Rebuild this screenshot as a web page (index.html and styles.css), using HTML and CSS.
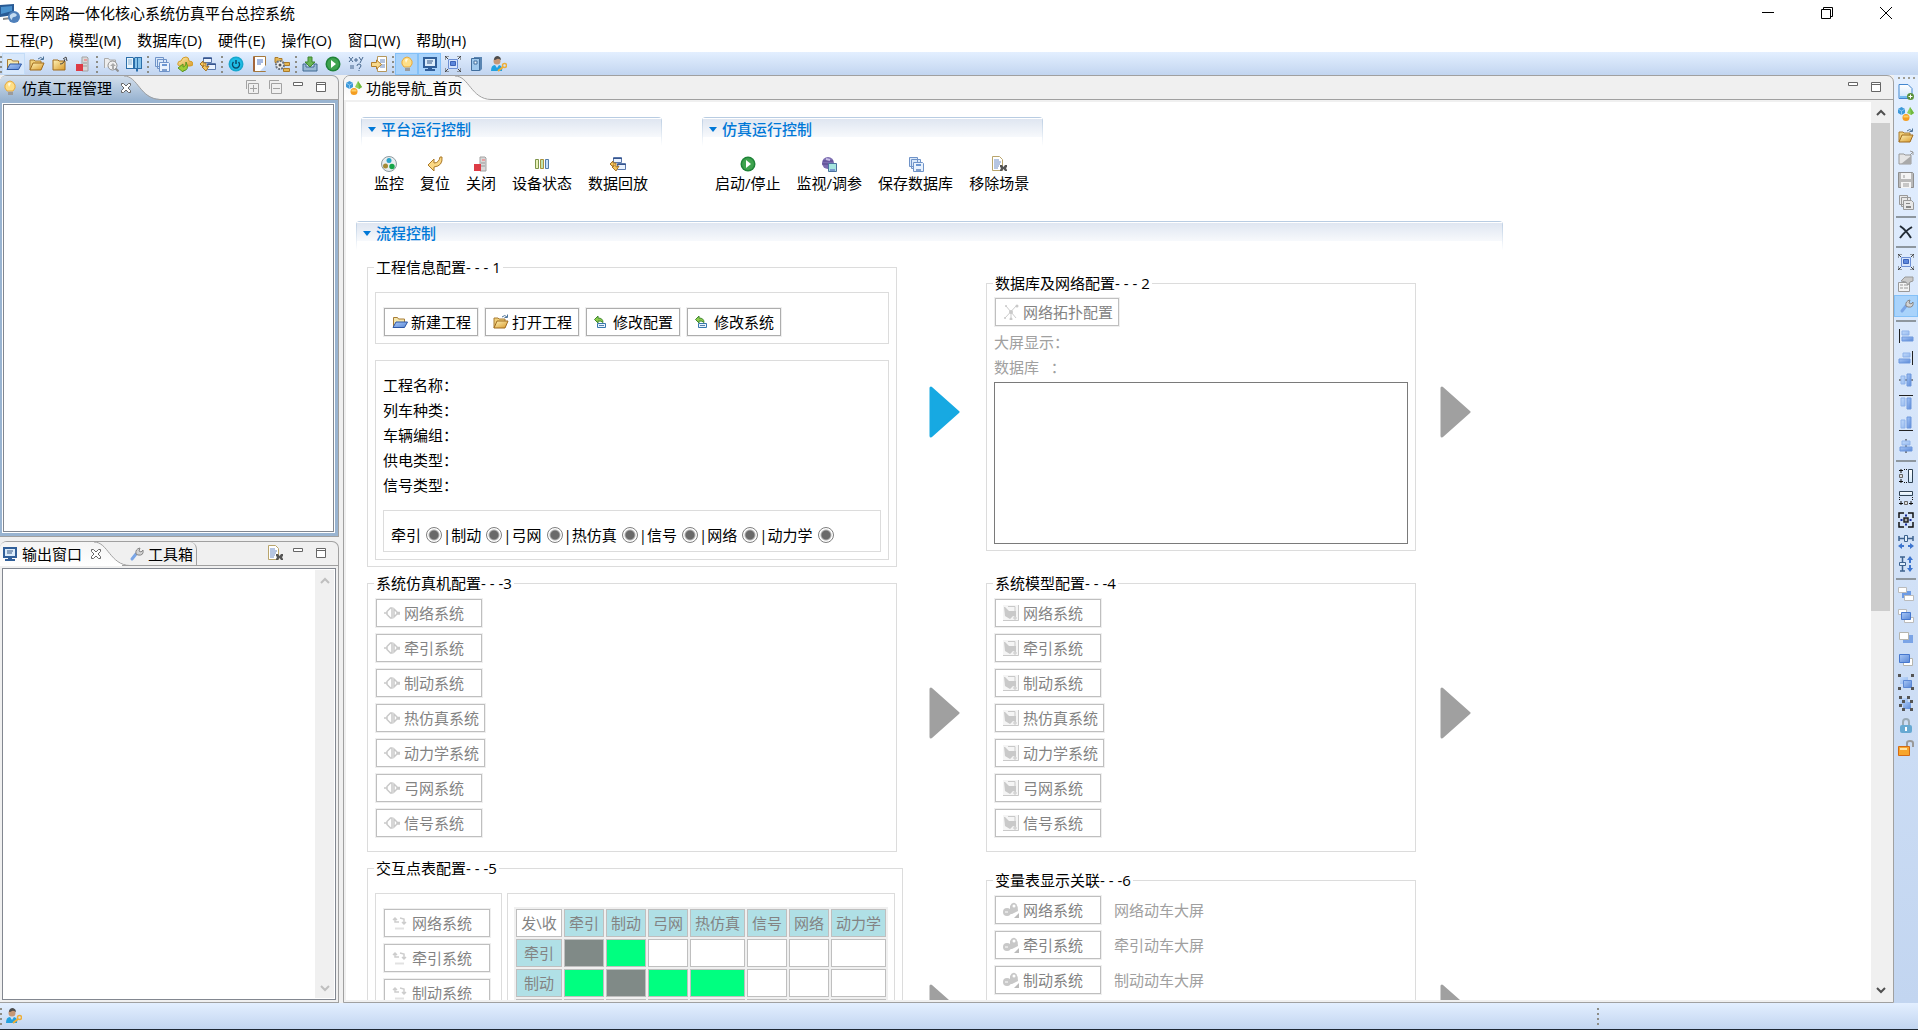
FILE: index.html
```html
<!DOCTYPE html>
<html lang="zh-CN">
<head>
<meta charset="utf-8">
<title>车网路一体化核心系统仿真平台总控系统</title>
<link rel="stylesheet" href="styles.css">
</head>
<body>
<svg class="sprite" width="0" height="0" aria-hidden="true">
<defs>
<linearGradient id="gy" x1="0" y1="0" x2="1" y2="1"><stop offset="0" stop-color="#fff3b8"/><stop offset="1" stop-color="#d99a2b"/></linearGradient>
<linearGradient id="gb" x1="0" y1="0" x2="1" y2="1"><stop offset="0" stop-color="#a9c8f7"/><stop offset="1" stop-color="#5a88d6"/></linearGradient>
<linearGradient id="gl" x1="0" y1="0" x2="1" y2="1"><stop offset="0" stop-color="#c3dbfb"/><stop offset="1" stop-color="#94b8ee"/></linearGradient>
<linearGradient id="gp" x1="0" y1="0" x2="0" y2="1"><stop offset="0" stop-color="#fff"/><stop offset="1" stop-color="#cfe6fa"/></linearGradient>
<linearGradient id="tabBlue" x1="0" y1="0" x2="0" y2="1"><stop offset="0" stop-color="#d3dfec"/><stop offset="1" stop-color="#99b4d1"/></linearGradient>
<linearGradient id="tabGrey" x1="0" y1="0" x2="0" y2="1"><stop offset="0" stop-color="#f4f4f4"/><stop offset="1" stop-color="#fff"/></linearGradient>
</defs>
<symbol id="app" viewBox="0 0 20 20"><path d="M0 2l14-1v11l-14 2z" fill="#285a94"/><path d="M1 4l11-1v5l-11 3z" fill="#4b92ce"/><path d="M3 15l8-1v2l-8 1z" fill="#888"/><circle cx="14" cy="14" r="6" fill="#4f80bb"/><path d="M10 12q4-4 7 0q-1 2-3 2t-2 3q-3-2-2-5z" fill="#c5dcf1"/></symbol>
<symbol id="folder-new" viewBox="0 0 16 16"><path d="M1.500 12V3.500h4l1 1.500h6v3" fill="#f5e7ad" stroke="#a87c35"/><path d="M1 13.500l3-5.500h11.500l-3 5.500z" fill="url(#gb)" stroke="#2d56a3"/></symbol>
<symbol id="folder-open" viewBox="0 0 16 16"><path d="M1 14V4h4l1 1h6v3" fill="#f0cf78" stroke="#a87c35"/><path d="M1 14l3-7h11l-3 7z" fill="url(#gy)" stroke="#a06a1c"/><path d="M9 3q3-3 5 0M14.500 0.500v3h-3" fill="none" stroke="#4d7398"/></symbol>
<symbol id="folder-up" viewBox="0 0 16 16"><path d="M1 14V4h5l1 1h6v9z" fill="url(#gy)" stroke="#a06a1c"/><path d="M8 8q4 0 5-5M11 3l3-2 1 4" fill="none" stroke="#444"/></symbol>
<symbol id="folder-grey" viewBox="0 0 16 16"><path d="M1 14V4h5l1 1h6v9z" fill="#e5e5e5" stroke="#999"/><path d="M3 14l10-8v8z" fill="#a9a9a9"/><path d="M12 5l3-3M12 1l3 1v3" fill="none" stroke="#999"/></symbol>
<symbol id="server" viewBox="0 0 16 16"><path d="M7 1h5l1 1v13H7z" fill="#d8d8d8" stroke="#a3a3a3"/><path d="M9 3h3v2H9z" fill="#e9a0a0"/><path d="M8 7h4M8 10h4" stroke="#999"/><path d="M1 8h7v7H1z" fill="#dd3b45"/></symbol>
<symbol id="export" viewBox="0 0 16 16"><path d="M1.500 12V2.500h4l1 1.500h6v4" fill="#eee" stroke="#aaa"/><circle cx="9.500" cy="9.500" r="4.500" fill="#f1f1f1" stroke="#8f8f8f"/><path d="M7 10l3-3 3 3h-2v3H9v-3z" fill="#aaa"/><path d="M12.500 12.500l3 3" stroke="#8f8f8f" stroke-width="2"/></symbol>
<symbol id="book" viewBox="0 0 16 16"><path d="M0 1h7l1 1 1-1h7v12h-4v3l-1-1-1 1v-3H0z" fill="#2b6ea9"/><path d="M1 2h6v10H1z" fill="#e9f5fc"/><path d="M2 4h4M2 6h4M2 8h4" stroke="#8ab2d2"/><path d="M9 2h2v10H9zM12 2h3v10h-3z" fill="#86c3e9"/></symbol>
<symbol id="save-all" viewBox="0 0 16 16"><g fill="#d9e8fa" stroke="#6f93c8"><path d="M1.500 1.500h8v9h-8zM3.500 3.500h9v9h-9z"/><path d="M5.500 6.500h9l1 1v8h-10z" fill="#e9f2fd"/></g><path d="M8 8h5v2H8z" fill="#6b96d2"/><path d="M8 13h5v2H8z" fill="#7f9fce"/></symbol>
<symbol id="save-all-grey" viewBox="0 0 16 16"><g fill="#e8e8e8" stroke="#999"><path d="M1.500 1.500h8v9h-8zM3.500 3.500h9v9h-9z"/><path d="M5.500 6.500h8l2 2v7h-10z"/></g><path d="M8 9h4v1H8zM8 12h5v2H8z" fill="#888"/></symbol>
<symbol id="save-grey" viewBox="0 0 16 16"><path d="M.5.500h14l1 1v14H.5z" fill="#b9b9b9" stroke="#8f8f8f"/><path d="M3 1h10v6H3zM3 10h10v6H3z" fill="#f4f4f4"/><path d="M6 3v3M5 12h6M5 14h6" stroke="#999"/></symbol>
<symbol id="cloud" viewBox="0 0 16 16"><path d="M4 10q-4 0-3-3 0-2 3-2 1-4 5-4 3 0 3 4 4 0 4 3 0 2-3 2z" fill="url(#gy)" stroke="#d49c28"/><path d="M1 12l5-4v3q3 0 3-5 4 8-3 9v1z" fill="#9dcd35" stroke="#5a9620"/></symbol>
<symbol id="playback" viewBox="0 0 16 16"><path d="M3.500 1.500h8v5h-8zM7.500 7.500h8v6h-8z" fill="#eaf3ff" stroke="#5a78ab"/><path d="M3 2h9v1H3zM7 8h9v1H7z" fill="#39568f"/><path d="M0 8l3-3v2h3v4l3-1-3 5-4-4 2-1V9H3v2z" fill="#f3c45a" stroke="#a6752a"/></symbol>
<symbol id="power" viewBox="0 0 16 16"><circle cx="8" cy="8" r="7.500" fill="#18a7ce"/><circle cx="8" cy="8" r="6" fill="#1fbde6"/><path d="M5.500 6a3.500 3.500 0 1 0 5 0M8 4v4" fill="none" stroke="#0b4a6a" stroke-width="1.500"/></symbol>
<symbol id="note" viewBox="0 0 16 16"><path d="M2.500.500h12v15h-12z" fill="#fff" stroke="#a5793e"/><path d="M3 1v14" stroke="#a2653c" stroke-width="2"/><path d="M6 4h6M6 6h6M6 8h4" stroke="#4d74c4"/><path d="M9 15l6-6v6z" fill="#c6daf8"/></symbol>
<symbol id="tree-gear" viewBox="0 0 16 16"><path d="M1 1.500h3l1 1h3v4H1zM9.500 6.500h6v3h-6zM9.500 12.500h6v3h-6z" fill="#e4b653" stroke="#a97a2b"/><circle cx="6" cy="9" r="4" fill="#eee" stroke="#69727e" stroke-width="2" stroke-dasharray="2 1"/><circle cx="6" cy="9" r="1.500" fill="#555"/></symbol>
<symbol id="import" viewBox="0 0 16 16"><path d="M1 8v7h14V8h-3v3H4V8z" fill="#9ab9d5" stroke="#41698f"/><path d="M6 1h4v5h3l-5 5-5-5h3z" fill="#6ab553" stroke="#3e8730"/></symbol>
<symbol id="play" viewBox="0 0 16 16"><circle cx="8" cy="8" r="7.500" fill="#1f8338"/><circle cx="8" cy="8" r="6" fill="#3ea34e"/><path d="M6 4l5 4-5 4z" fill="#fff"/></symbol>
<symbol id="formula" viewBox="0 0 16 16"><path d="M1 1l4 5M5 1L1 6M6 4h4M8 2v4M11 1l2 3M15 1l-3 6M2 10h4M2 12h4M9 10q0-2 2-2t2 2l-2 3M11 14v1" fill="none" stroke="#44658c"/></symbol>
<symbol id="doc-arrow" viewBox="0 0 16 16"><path d="M6.500.500h9v15h-9z" fill="#fff" stroke="#b5975c"/><path d="M9 4h5M9 6h5M9 9h5M9 11h5" stroke="#6686bb"/><path d="M0.500 6.500h5V4l5 4.500-5 4.500v-2.500h-5z" fill="#f8d98b" stroke="#b37e2b"/></symbol>
<symbol id="bulb" viewBox="0 0 16 16"><path d="M5 11Q2 8 3 5q2-4 5-4t5 4q1 3-2 6z" fill="#ffdf86" stroke="#e6a83e"/><path d="M6 4q1-2 3-1l-2 4z" fill="#fff9df"/><path d="M6 12h5v3H6z" fill="#9b9b9b"/></symbol>
<symbol id="monitor" viewBox="0 0 16 16"><path d="M2 2h12v9H2z" fill="#dcecfa" stroke="#315f99" stroke-width="2"/><path d="M5 5h6M5 7h5" stroke="#355784"/><path d="M6 12h4v1h3v2H3v-2h3z" fill="#315f99"/></symbol>
<symbol id="fit" viewBox="0 0 16 16"><path d="M3.500 3.500h9v9h-9z" fill="#d5e4fc" stroke="#6e90d4"/><path d="M5.500 5.500h5v4h-5z" fill="#5b86dc" stroke="#3c63b8"/><path d="M0 4V0h4M12 0h4v4M16 12v4h-4M4 16H0v-4M0 0l3 3M16 0l-3 3M0 16l3-3M16 16l-3-3" fill="none" stroke="#444"/></symbol>
<symbol id="notebook" viewBox="0 0 16 16"><path d="M6 1h8v12l-2 2H6z" fill="#5a85b2"/><path d="M3.500 2.500h8v12h-8z" fill="#9fc9ed" stroke="#416e9d"/><path d="M6 5h3v3H6z" fill="#eaf4fc" stroke="#416e9d"/></symbol>
<symbol id="user-key" viewBox="0 0 16 16"><circle cx="6" cy="5" r="3.500" fill="#c79775"/><path d="M3 4q0-4 4-4 3 1 3 4-3-2-4-1t-3 1z" fill="#4c4c4c"/><path d="M0 15q0-6 4-6l2 3 2-3q4 1 3 6z" fill="#21a1df"/><path d="M7 15l5-4" stroke="#edae38" stroke-width="2"/><circle cx="13.500" cy="9.500" r="2" fill="none" stroke="#edae38" stroke-width="1.500"/></symbol>
<symbol id="nav" viewBox="0 0 16 16"><path d="M0 3l3.500-2L7 3v4L3.500 9 0 7z" fill="#3c99da"/><path d="M0 3l3.500 2L7 3M3.500 5v4" fill="none" stroke="#8dc7ef"/><path d="M9 7l3-6 4 6-3 2z" fill="#8fd05c"/><path d="M12 1l1 8 3-2z" fill="#6fb83e"/><circle cx="8" cy="11.500" r="3.500" fill="#f49d20"/><path d="M5.500 10.500h5" stroke="#ffcf63" stroke-width="2"/></symbol>
<symbol id="cams" viewBox="0 0 16 16"><circle cx="8" cy="8" r="7.500" fill="#e9eef0" stroke="#8d9a9f"/><circle cx="8" cy="4.500" r="2.500" fill="#29a3c8"/><circle cx="4.500" cy="10" r="2.500" fill="#a58a36"/><circle cx="11" cy="10.500" r="2.700" fill="#17a548"/></symbol>
<symbol id="reset" viewBox="0 0 16 16"><path d="M1 9l6-6v4q5 0 6-6h2q1 9-8 10v4z" fill="#fbd884" stroke="#ac7a28"/></symbol>
<symbol id="bars" viewBox="0 0 16 16"><path d="M1.500 3.500h3v9h-3z" fill="#e8f1b7" stroke="#7c944b"/><path d="M6.500 3.500h3v9h-3z" fill="#bfe3b0" stroke="#a8923c"/><path d="M11.500 3.500h3v9h-3z" fill="#c9dffa" stroke="#527ca9"/></symbol>
<symbol id="watch" viewBox="0 0 16 16"><circle cx="7" cy="7" r="6" fill="#7c6db0"/><path d="M2 5h10M1 8h12" stroke="#52458a"/><path d="M5 3l4 1" stroke="#c9bee8" stroke-width="2"/><path d="M7.500 7.500h8v8h-8z" fill="#a6e5df" stroke="#4b719e"/><path d="M9 13h5v2H9z" fill="#7a9bd0"/></symbol>
<symbol id="doc-x" viewBox="0 0 16 16"><path d="M1.500.500h7l3 3v11h-10z" fill="#fff" stroke="#b9a56c"/><path d="M3 4h5M3 6h7M3 8h6M3 10h5M3 12h4" stroke="#6d8cc5"/><path d="M9 9h2l1.500 2L14 9h2v2l-1 1 1 2v1h-2l-1.500-2-1.500 2H9v-1l1-2-1-1z" fill="#555"/></symbol>
<symbol id="edit" viewBox="0 0 16 16"><path d="M3.500 9.500h8v4h-8z" fill="#e9f4ff" stroke="#3876ad"/><path d="M5 11.500h5" stroke="#5983ad"/><path d="M.5 5.500L4 2v2q5 0 5 4.500Q7 6.500 4 7v2z" fill="#8ccb4c" stroke="#3f8730"/></symbol>
<symbol id="topology" viewBox="0 0 16 16"><path d="M3 2l10 12M14 1L2 14M8 8v7" stroke="#ccc"/><g fill="#c9c9c9"><circle cx="8" cy="8" r="2"/><circle cx="14" cy="2" r="1.500"/><circle cx="3" cy="2" r="1"/><circle cx="2" cy="14" r="1"/><circle cx="8" cy="15" r="1.500"/></g></symbol>
<symbol id="plug" viewBox="0 0 16 16"><path d="M0 8h3M3 6.500L6.500 3H8v10H6.500L3 9.500zM10 4l3 3v2l-3 3zM13 7.500h3M13 9h3" fill="none" stroke="#c9c9c9" stroke-width="1.500"/></symbol>
<symbol id="model" viewBox="0 0 16 16"><path d="M0 0h16v16H0z" fill="#f5f5f5"/><path d="M15.500 0v15.500H0" fill="none" stroke="#cacaca"/><path d="M1 2h1l4 4h7v6l-3-1-3 3-5-3z" fill="#c9c9c9"/><path d="M5 1.500h7v5M10 13h4M12 11v4" fill="none" stroke="#c9c9c9"/></symbol>
<symbol id="swap" viewBox="0 0 16 16"><path d="M3 3v4h4M8 3l4 1v5M1 5l2-2 2 2M10 7l2 2 2-2" fill="none" stroke="#cdcdcd" stroke-width="1.500"/><path d="M3 13.500h9" stroke="#e2e2e2" stroke-width="2"/></symbol>
<symbol id="link" viewBox="0 0 16 16"><circle cx="4" cy="10" r="4" fill="#c8c8c8"/><path d="M7 12V4q2-4 5-3 3 2 3 8l-6 3z" fill="#c8c8c8"/><circle cx="11" cy="4" r="1.500" fill="#fff"/><path d="M2 10h3" stroke="#fff"/><path d="M11 16l5-5v5z" fill="#bbb"/></symbol>
<symbol id="page-add" viewBox="0 0 16 16"><path d="M1 .5h9l4 4v10H1z" fill="url(#gp)" stroke="#4387cf"/><path d="M2 12h8v2H2z" fill="#75bdef"/><circle cx="12.500" cy="12.500" r="3.500" fill="#5a913a"/><path d="M10.500 12.500h4M12.500 10.500v4" stroke="#fff"/></symbol>
<symbol id="delete" viewBox="0 0 16 16"><path d="M2 2q6 4 11 12M14 3Q7 7 2 14" fill="none" stroke="#222b35" stroke-width="2"/></symbol>
<symbol id="props" viewBox="0 0 16 16"><path d="M.5 6.500h11v9H.5z" fill="#f3f3f3" stroke="#999"/><path d="M2 9h3M6 9h4M2 12h3M6 12h4" stroke="#999"/><path d="M3 5l4-4h8v4l-3 1-2 3-2-3z" fill="#c9c9c9" stroke="#999"/></symbol>
<symbol id="wrench" viewBox="0 0 16 16"><path d="M4 13l4-5" stroke="#7ba6e6" stroke-width="3" stroke-linecap="round"/><path d="M8 8q-1-5 4-6l-1 3 2 1 2-2q1 6-5 5z" fill="#d3d3d3" stroke="#858585"/></symbol>
<symbol id="al" viewBox="0 0 16 16"><path d="M1.500 1v14" stroke="#222"/><path d="M4 3h7v4H4z" fill="url(#gl)" stroke="#8fb3ea"/><path d="M4 9h11v4H4z" fill="url(#gb)" stroke="#6f98dd"/></symbol>
<symbol id="ar" viewBox="0 0 16 16"><path d="M14.500 1v14" stroke="#222"/><path d="M5 3h7v4H5z" fill="url(#gl)" stroke="#8fb3ea"/><path d="M1 9h11v4H1z" fill="url(#gb)" stroke="#6f98dd"/></symbol>
<symbol id="ac" viewBox="0 0 16 16"><path d="M1 8h14" stroke="#222"/><path d="M3 4h4v8H3z" fill="url(#gl)" stroke="#8fb3ea"/><path d="M9 2h4v12H9z" fill="url(#gb)" stroke="#6f98dd"/></symbol>
<symbol id="at" viewBox="0 0 16 16"><path d="M1 1.500h14" stroke="#222"/><path d="M3 4h4v8H3z" fill="url(#gl)" stroke="#8fb3ea"/><path d="M9 4h4v11H9z" fill="url(#gb)" stroke="#6f98dd"/></symbol>
<symbol id="ab" viewBox="0 0 16 16"><path d="M1 14.500h14" stroke="#222"/><path d="M3 4h4v8H3z" fill="url(#gl)" stroke="#8fb3ea"/><path d="M9 1h4v11H9z" fill="url(#gb)" stroke="#6f98dd"/></symbol>
<symbol id="am" viewBox="0 0 16 16"><path d="M8 1v14" stroke="#222"/><path d="M4 3h8v4H4z" fill="url(#gl)" stroke="#8fb3ea"/><path d="M2 9h12v4H2z" fill="url(#gb)" stroke="#6f98dd"/></symbol>
<symbol id="mh" viewBox="0 0 16 16"><path d="M10.500 1.500h4v13h-4z" fill="url(#gp)" stroke="#2f4254"/><path d="M1.500 6.500h3v3h-3z" fill="#ddd" stroke="#666"/><path d="M1 2.500h4M3 1v4M1 13.500h4M3 11v4" stroke="#111"/><path d="M6 1.500h4M6 14.500h4" stroke="#111" stroke-dasharray="1 1"/></symbol>
<symbol id="mw" viewBox="0 0 16 16"><path d="M1.500 1.500h13v4h-13z" fill="url(#gp)" stroke="#2f4254"/><path d="M6.500 11.500h3v3h-3z" fill="#ddd" stroke="#666"/><path d="M1 13.500h4M3 11v4M11 13.500h4M13 11v4" stroke="#111"/><path d="M1.500 7v4M14.500 7v4" stroke="#111" stroke-dasharray="1 1"/></symbol>
<symbol id="ms" viewBox="0 0 16 16"><path d="M1 6V1h5M10 1h5v5M15 10v5h-5M6 15H1v-5" fill="none" stroke="#111" stroke-width="1.500"/><path d="M6 6h4v4H6z" fill="#aaa" stroke="#222" stroke-width="1.500"/><path d="M2 8h3M11 8h3M8 2v3M8 11v3M3.500 7v2M12.500 7v2M7 3.500h2M7 12.500h2" stroke="#162a9c"/></symbol>
<symbol id="dh" viewBox="0 0 16 16"><path d="M1 2v5M15 2v5M1 4.500h14" stroke="#3d628e" stroke-width="1.500"/><path d="M6.500 1.500h3v6h-3z" fill="#e2effc" stroke="#3d628e"/><path d="M0 12l4-3v2h2v2H4v2zM16 12l-4-3v2h-2v2h2v2z" fill="#3d75cf"/></symbol>
<symbol id="dv" viewBox="0 0 16 16"><path d="M2 1h5M2 15h5M4.500 1v14" stroke="#3d628e" stroke-width="1.500"/><path d="M1.500 6.500h6v3h-6z" fill="#e2effc" stroke="#3d628e"/><path d="M12 0l3 4h-2v3h-2V4H9zM12 16l3-4h-2V9h-2v3H9z" fill="#3d75cf"/></symbol>
<symbol id="z1" viewBox="0 0 16 16"><path d="M4 5h9v7H4z" fill="#6d9be4"/><path d="M.5 1.500h8v5h-8zM6.500 9.500h9v5h-9z" fill="#fff" stroke="#bbb"/></symbol>
<symbol id="z2" viewBox="0 0 16 16"><path d="M.5 1.500h8v5h-8zM6.500 9.500h9v5h-9z" fill="#fff" stroke="#bbb"/><path d="M3.500 4.500h9v7h-9z" fill="url(#gb)" stroke="#4778ce"/></symbol>
<symbol id="z3" viewBox="0 0 16 16"><path d="M5 5h10v8H5z" fill="#7ba4e6"/><path d="M1.500 2.500h9v7h-9z" fill="#fff" stroke="#b5b5ae"/></symbol>
<symbol id="z4" viewBox="0 0 16 16"><path d="M5.500 6.500h9v7h-9z" fill="#fff" stroke="#b5b5ae"/><path d="M1.500 2.500h10v8h-10z" fill="url(#gb)" stroke="#4778ce"/></symbol>
<symbol id="group" viewBox="0 0 16 16"><path d="M2 3h8v7H2z" fill="url(#gl)"/><path d="M5.500 6.500h8v7h-8z" fill="url(#gb)" stroke="#5d89d5"/><path d="M0 0h3v3H0zM13 0h3v3h-3zM0 13h3v3H0zM13 13h3v3h-3z" fill="#555"/></symbol>
<symbol id="ungroup" viewBox="0 0 16 16"><path d="M2 2h8v7H2z" fill="url(#gl)"/><path d="M5 6h8v7H5z" fill="url(#gb)"/><path d="M1 0h3v3H1zM9 0h3v3H9zM1 8h3v3H1zM4 4h3v3H4zM12 4h3v3h-3zM4 12h3v3H4zM12 12h3v3h-3z" fill="#555"/></symbol>
<symbol id="lock" viewBox="0 0 16 16"><path d="M5 8V4q0-3 3-3t3 3v4" fill="none" stroke="#9aaab5" stroke-width="2"/><rect x="2" y="7" width="12" height="8" rx="2" fill="#67a9d2"/><path d="M8 9v4" stroke="#fff" stroke-width="2"/></symbol>
<symbol id="unlock" viewBox="0 0 16 16"><path d="M9 7V3q0-2 3-2t3 2v4" fill="none" stroke="#999" stroke-width="2"/><path d="M.5 6.500h11v9H.5z" fill="#f7a52c" stroke="#d36a14"/><path d="M2 9h7" stroke="#ffe1a2" stroke-width="2"/></symbol>
<symbol id="expand" viewBox="0 0 16 16"><path d="M2.500 10V1.500H12M4.500 4.500h10v10h-10zM6 9.500h7M9.500 6v7" fill="none" stroke="#a2a2a2"/></symbol>
<symbol id="collapse" viewBox="0 0 16 16"><path d="M2.500 10V1.500H12M4.500 4.500h10v10h-10zM6 9.500h7" fill="none" stroke="#a2a2a2"/></symbol>
<symbol id="min" viewBox="0 0 16 16"><path d="M3.500 3.500h9v3h-9z" fill="#fff" stroke="#666"/></symbol>
<symbol id="max" viewBox="0 0 16 16"><path d="M3.500 3.500h9v9h-9zM3 5.500h10" fill="#fff" stroke="#666"/></symbol>
<symbol id="close" viewBox="0 0 12 12"><path d="M1.500 1.500h2L6 4l2.500-2.500h2v2L8 6l2.500 2.500v2h-2L6 8l-2.500 2.500h-2v-2L4 6 1.500 3.500z" fill="#fff" stroke="#666"/></symbol>
<symbol id="up" viewBox="0 0 10 10"><path d="M1 7l4-4 4 4" fill="none" stroke="currentColor" stroke-width="2"/></symbol>
<symbol id="down" viewBox="0 0 10 10"><path d="M1 3l4 4 4-4" fill="none" stroke="currentColor" stroke-width="2"/></symbol>
<symbol id="arrow" viewBox="0 0 31 52"><path d="M2 2v48l27-24z" fill="currentColor" stroke="currentColor" stroke-width="3" stroke-linejoin="round"/></symbol>
</svg>

<header class="titlebar">
  <svg class="logo"><use href="#app"/></svg>
  <h1>车网路一体化核心系统仿真平台总控系统</h1>
  <div class="window-buttons">
    <button aria-label="最小化"><svg viewBox="0 0 12 12"><path d="M0 5.500h12"/></svg></button>
    <button aria-label="还原"><svg viewBox="0 0 12 12"><path d="M.5 2.500h9v9h-9zM2.500 2V.500h9v9H10"/></svg></button>
    <button aria-label="关闭"><svg viewBox="0 0 12 12"><path d="M0 0l12 12M12 0L0 12"/></svg></button>
  </div>
</header>
<nav class="menubar">
  <button>工程(P)</button><button>模型(M)</button><button>数据库(D)</button><button>硬件(E)</button><button>操作(O)</button><button>窗口(W)</button><button>帮助(H)</button>
</nav>
<div class="toolbar">
  <i class="grip"></i>
  <button class="tool hot" aria-label="新建"><svg><use href="#folder-new"/></svg></button>
  <button class="tool" aria-label="打开"><svg><use href="#folder-open"/></svg></button>
  <button class="tool" aria-label="关闭工程"><svg><use href="#folder-up"/></svg></button>
  <button class="tool" aria-label="关机"><svg><use href="#server"/></svg></button>
  <i class="grip"></i>
  <button class="tool" aria-label="导出"><svg><use href="#export"/></svg></button>
  <button class="tool" aria-label="模型库"><svg><use href="#book"/></svg></button>
  <i class="grip"></i>
  <button class="tool" aria-label="保存数据库"><svg><use href="#save-all"/></svg></button>
  <button class="tool" aria-label="云"><svg><use href="#cloud"/></svg></button>
  <button class="tool" aria-label="回放"><svg><use href="#playback"/></svg></button>
  <i class="grip"></i>
  <button class="tool" aria-label="电源"><svg><use href="#power"/></svg></button>
  <button class="tool" aria-label="记录"><svg><use href="#note"/></svg></button>
  <button class="tool" aria-label="配置"><svg><use href="#tree-gear"/></svg></button>
  <i class="grip"></i>
  <button class="tool" aria-label="下载"><svg><use href="#import"/></svg></button>
  <button class="tool" aria-label="启动"><svg><use href="#play"/></svg></button>
  <button class="tool" aria-label="公式"><svg><use href="#formula"/></svg></button>
  <button class="tool" aria-label="导入"><svg><use href="#doc-arrow"/></svg></button>
  <i class="grip"></i>
  <button class="tool on" aria-label="工程管理"><svg><use href="#bulb"/></svg></button>
  <button class="tool on" aria-label="输出窗口"><svg><use href="#monitor"/></svg></button>
  <button class="tool" aria-label="全屏"><svg><use href="#fit"/></svg></button>
  <button class="tool" aria-label="手册"><svg><use href="#notebook"/></svg></button>
  <button class="tool" aria-label="用户"><svg><use href="#user-key"/></svg></button>
</div>

<div class="workbench">
  <aside class="views">
    <section class="view active">
      <div class="tabs">
        <div class="tab"><svg class="icon"><use href="#bulb"/></svg>仿真工程管理<button class="close" aria-label="关闭"><svg><use href="#close"/></svg></button></div>
        <svg class="curve" viewBox="0 0 36 24"><path d="M0 0C14 0 16 22 36 23V24H0z" fill="url(#tabBlue)"/><path d="M0 0C14 0 16 23 36 23.500" fill="none" stroke="#a0a0a0"/></svg>
        <div class="tab-tools">
          <button aria-label="展开"><svg><use href="#expand"/></svg></button><button aria-label="折叠"><svg><use href="#collapse"/></svg></button><button aria-label="最小化"><svg><use href="#min"/></svg></button><button aria-label="最大化"><svg><use href="#max"/></svg></button>
        </div>
      </div>
      <div class="pane"></div>
    </section>
    <section class="view">
      <div class="tabs">
        <div class="tab"><svg class="icon"><use href="#monitor"/></svg>输出窗口<button class="close" aria-label="关闭"><svg><use href="#close"/></svg></button></div>
        <svg class="curve" viewBox="0 0 36 24"><path d="M0 0C14 0 16 22 36 23V24H0z" fill="url(#tabGrey)"/><path d="M0 0C14 0 16 23 36 23.500" fill="none" stroke="#a0a0a0"/></svg>
        <div class="tab back"><svg class="icon"><use href="#wrench"/></svg>工具箱</div>
        <div class="tab-tools">
          <button aria-label="清空"><svg><use href="#doc-x"/></svg></button><button aria-label="最小化"><svg><use href="#min"/></svg></button><button aria-label="最大化"><svg><use href="#max"/></svg></button>
        </div>
      </div>
      <div class="pane">
        <div class="scrollbar idle"><button aria-label="向上"><svg><use href="#up"/></svg></button><button aria-label="向下"><svg><use href="#down"/></svg></button></div>
      </div>
    </section>
  </aside>

  <main class="view editor">
    <div class="tabs">
      <div class="tab"><svg class="icon"><use href="#nav"/></svg>功能导航_首页</div>
      <svg class="curve" viewBox="0 0 36 24"><path d="M0 0C14 0 16 22 36 23V24H0z" fill="url(#tabGrey)"/><path d="M0 0C14 0 16 23 36 23.500" fill="none" stroke="#a0a0a0"/></svg>
      <div class="tab-tools"><button aria-label="最小化"><svg><use href="#min"/></svg></button><button aria-label="最大化"><svg><use href="#max"/></svg></button></div>
    </div>
    <div class="editor-body">
      <div class="canvas">
        <div class="controls">
          <section class="section">
            <h2>平台运行控制</h2>
            <div class="actions">
              <button><svg><use href="#cams"/></svg>监控</button><button><svg><use href="#reset"/></svg>复位</button><button><svg><use href="#server"/></svg>关闭</button><button><svg><use href="#bars"/></svg>设备状态</button><button><svg><use href="#playback"/></svg>数据回放</button>
            </div>
          </section>
          <section class="section">
            <h2>仿真运行控制</h2>
            <div class="actions">
              <button><svg><use href="#play"/></svg>启动/停止</button><button><svg><use href="#watch"/></svg>监视/调参</button><button><svg><use href="#save-all"/></svg>保存数据库</button><button><svg><use href="#doc-x"/></svg>移除场景</button>
            </div>
          </section>
        </div>
        <section class="section flow">
          <h2>流程控制</h2>
          <div class="steps">
            <fieldset class="step-main">
              <legend>工程信息配置- - - 1</legend>
              <div class="box buttons">
                <button class="btn"><svg><use href="#folder-new"/></svg>新建工程</button>
                <button class="btn"><svg><use href="#folder-open"/></svg>打开工程</button>
                <button class="btn"><svg><use href="#edit"/></svg>修改配置</button>
                <button class="btn"><svg><use href="#edit"/></svg>修改系统</button>
              </div>
              <div class="box info">
                <p>工程名称：</p><p>列车种类：</p><p>车辆编组：</p><p>供电类型：</p><p>信号类型：</p>
                <div class="box radios">
                  <label>牵引<input type="radio" name="r1" checked></label><label>|制动<input type="radio" name="r2" checked></label><label>|弓网<input type="radio" name="r3" checked></label><label>|热仿真<input type="radio" name="r4" checked></label><label>|信号<input type="radio" name="r5" checked></label><label>|网络<input type="radio" name="r6" checked></label><label>|动力学<input type="radio" name="r7" checked></label>
                </div>
              </div>
            </fieldset>
            <svg class="arrow ready"><use href="#arrow"/></svg>
            <fieldset>
              <legend>数据库及网络配置- - - 2</legend>
              <div class="stack">
                <button class="btn" disabled><svg><use href="#topology"/></svg>网络拓扑配置</button>
              </div>
              <div class="hints"><label for="db">大屏显示：</label><label for="db">数据库&nbsp;&nbsp;&nbsp;：</label></div>
              <textarea id="db"></textarea>
            </fieldset>
            <svg class="arrow"><use href="#arrow"/></svg>

            <fieldset class="step-main list">
              <legend>系统仿真机配置- - -3</legend>
              <div class="stack">
                <button class="btn" disabled><svg><use href="#plug"/></svg>网络系统</button>
                <button class="btn" disabled><svg><use href="#plug"/></svg>牵引系统</button>
                <button class="btn" disabled><svg><use href="#plug"/></svg>制动系统</button>
                <button class="btn" disabled><svg><use href="#plug"/></svg>热仿真系统</button>
                <button class="btn" disabled><svg><use href="#plug"/></svg>动力学系统</button>
                <button class="btn" disabled><svg><use href="#plug"/></svg>弓网系统</button>
                <button class="btn" disabled><svg><use href="#plug"/></svg>信号系统</button>
              </div>
            </fieldset>
            <svg class="arrow"><use href="#arrow"/></svg>
            <fieldset class="list">
              <legend>系统模型配置- - -4</legend>
              <div class="stack">
                <button class="btn" disabled><svg><use href="#model"/></svg>网络系统</button>
                <button class="btn" disabled><svg><use href="#model"/></svg>牵引系统</button>
                <button class="btn" disabled><svg><use href="#model"/></svg>制动系统</button>
                <button class="btn" disabled><svg><use href="#model"/></svg>热仿真系统</button>
                <button class="btn" disabled><svg><use href="#model"/></svg>动力学系统</button>
                <button class="btn" disabled><svg><use href="#model"/></svg>弓网系统</button>
                <button class="btn" disabled><svg><use href="#model"/></svg>信号系统</button>
              </div>
            </fieldset>
            <svg class="arrow"><use href="#arrow"/></svg>

            <fieldset>
              <legend>交互点表配置- - -5</legend>
              <div class="exchange">
                <div class="box stack">
                  <button class="btn" disabled><svg><use href="#swap"/></svg>网络系统</button>
                  <button class="btn" disabled><svg><use href="#swap"/></svg>牵引系统</button>
                  <button class="btn" disabled><svg><use href="#swap"/></svg>制动系统</button>
                  <button class="btn" disabled><svg><use href="#swap"/></svg>热仿真系统</button>
                  <button class="btn" disabled><svg><use href="#swap"/></svg>动力学系统</button>
                  <button class="btn" disabled><svg><use href="#swap"/></svg>弓网系统</button>
                  <button class="btn" disabled><svg><use href="#swap"/></svg>信号系统</button>
                </div>
                <div class="box matrix">
                  <table>
                    <colgroup><col class="c-head"><col class="c2"><col class="c2"><col class="c2"><col class="c3"><col class="c2"><col class="c2"><col class="c3"></colgroup>
                    <tr><td>发\收</td><th>牵引</th><th>制动</th><th>弓网</th><th>热仿真</th><th>信号</th><th>网络</th><th>动力学</th></tr>
                    <tr><th>牵引</th><td class="self"></td><td class="set"></td><td></td><td></td><td></td><td></td><td></td></tr>
                    <tr><th>制动</th><td class="set"></td><td class="self"></td><td class="set"></td><td class="set"></td><td></td><td></td><td></td></tr>
                    <tr><th>弓网</th><td></td><td></td><td></td><td></td><td></td><td></td><td></td></tr>
                    <tr><th>热仿真</th><td></td><td></td><td></td><td></td><td></td><td></td><td></td></tr>
                    <tr><th>信号</th><td></td><td></td><td></td><td></td><td></td><td></td><td></td></tr>
                    <tr><th>网络</th><td></td><td></td><td></td><td></td><td></td><td></td><td></td></tr>
                    <tr><th>动力学</th><td></td><td></td><td></td><td></td><td></td><td></td><td></td></tr>
                  </table>
                </div>
              </div>
            </fieldset>
            <svg class="arrow"><use href="#arrow"/></svg>
            <fieldset class="list">
              <legend>变量表显示关联- - -6</legend>
              <div class="stack">
                <div class="pair"><button class="btn" disabled><svg><use href="#link"/></svg>网络系统</button><span>网络动车大屏</span></div>
                <div class="pair"><button class="btn" disabled><svg><use href="#link"/></svg>牵引系统</button><span>牵引动车大屏</span></div>
                <div class="pair"><button class="btn" disabled><svg><use href="#link"/></svg>制动系统</button><span>制动动车大屏</span></div>
                <div class="pair"><button class="btn" disabled><svg><use href="#link"/></svg>热仿真系统</button><span>热仿真动车大屏</span></div>
                <div class="pair"><button class="btn" disabled><svg><use href="#link"/></svg>动力学系统</button><span>动力学动车大屏</span></div>
                <div class="pair"><button class="btn" disabled><svg><use href="#link"/></svg>弓网系统</button><span>弓网动车大屏</span></div>
                <div class="pair"><button class="btn" disabled><svg><use href="#link"/></svg>信号系统</button><span>信号动车大屏</span></div>
              </div>
            </fieldset>
            <svg class="arrow"><use href="#arrow"/></svg>
          </div>
        </section>
      </div>
      <div class="scrollbar"><button aria-label="向上"><svg><use href="#up"/></svg></button><div class="track"><div class="thumb"></div></div><button aria-label="向下"><svg><use href="#down"/></svg></button></div>
    </div>
  </main>

  <div class="sidebar">
    <i class="grip flat"></i>
    <button class="tool" aria-label="新建"><svg><use href="#page-add"/></svg></button>
    <button class="tool" aria-label="导航"><svg><use href="#nav"/></svg></button>
    <button class="tool" aria-label="打开"><svg><use href="#folder-open"/></svg></button>
    <button class="tool" aria-label="关闭工程"><svg><use href="#folder-grey"/></svg></button>
    <button class="tool" aria-label="保存"><svg><use href="#save-grey"/></svg></button>
    <button class="tool" aria-label="全部保存"><svg><use href="#save-all-grey"/></svg></button>
    <hr>
    <button class="tool" aria-label="删除"><svg><use href="#delete"/></svg></button>
    <hr>
    <button class="tool" aria-label="全屏"><svg><use href="#fit"/></svg></button>
    <button class="tool" aria-label="属性"><svg><use href="#props"/></svg></button>
    <button class="tool on" aria-label="工具箱"><svg><use href="#wrench"/></svg></button>
    <hr>
    <button class="tool" aria-label="左对齐"><svg><use href="#al"/></svg></button>
    <button class="tool" aria-label="右对齐"><svg><use href="#ar"/></svg></button>
    <button class="tool" aria-label="垂直居中"><svg><use href="#ac"/></svg></button>
    <button class="tool" aria-label="上对齐"><svg><use href="#at"/></svg></button>
    <button class="tool" aria-label="下对齐"><svg><use href="#ab"/></svg></button>
    <button class="tool" aria-label="水平居中"><svg><use href="#am"/></svg></button>
    <hr>
    <button class="tool" aria-label="等高"><svg><use href="#mh"/></svg></button>
    <button class="tool" aria-label="等宽"><svg><use href="#mw"/></svg></button>
    <button class="tool" aria-label="等大小"><svg><use href="#ms"/></svg></button>
    <button class="tool" aria-label="水平分布"><svg><use href="#dh"/></svg></button>
    <button class="tool" aria-label="垂直分布"><svg><use href="#dv"/></svg></button>
    <hr>
    <button class="tool" aria-label="下移一层"><svg><use href="#z1"/></svg></button>
    <button class="tool" aria-label="上移一层"><svg><use href="#z2"/></svg></button>
    <button class="tool" aria-label="置底"><svg><use href="#z3"/></svg></button>
    <button class="tool" aria-label="置顶"><svg><use href="#z4"/></svg></button>
    <button class="tool" aria-label="组合"><svg><use href="#group"/></svg></button>
    <button class="tool" aria-label="取消组合"><svg><use href="#ungroup"/></svg></button>
    <button class="tool" aria-label="锁定"><svg><use href="#lock"/></svg></button>
    <button class="tool" aria-label="解锁"><svg><use href="#unlock"/></svg></button>
  </div>
</div>

<footer class="statusbar">
  <i class="grip"></i>
  <button class="tool" aria-label="用户"><svg><use href="#user-key"/></svg></button>
  <i class="grip progress"></i>
</footer>
</body>
</html>
```
FILE: styles.css
```css
* { box-sizing: border-box; }

body {
  margin: 0;
  height: 100vh;
  display: flex;
  flex-direction: column;
  overflow: hidden;
  background: #fff;
  color: #000;
  font: 15px/20px "Open Sans", "Noto Sans CJK SC", sans-serif;
}

h1, h2, p { margin: 0; font: inherit; }

button {
  margin: 0;
  padding: 0;
  border: 0;
  background: none;
  color: inherit;
  font: inherit;
  white-space: nowrap;
}

svg { display: block; width: 16px; height: 16px; flex: none; }

.sprite { position: absolute; width: 0; height: 0; }

/* window frame */
.titlebar { display: flex; align-items: center; height: 28px; flex: none; gap: 5px; padding-bottom: 2px; }
.titlebar .logo { width: 20px; height: 20px; }
.window-buttons { display: flex; margin-left: auto; padding-right: 3px; }
.window-buttons button { width: 59px; height: 26px; display: grid; place-items: center; }
.window-buttons svg { width: 12px; height: 12px; fill: none; stroke: #000; }

.menubar { display: flex; gap: 16px; height: 24px; padding-left: 5px; align-items: center; flex: none; }

.toolbar, .statusbar {
  display: flex;
  align-items: center;
  flex: none;
  background: linear-gradient(#e3efff, #c2d5f0);
}
.toolbar { height: 23px; }

.tool { width: 23px; height: 22px; display: grid; place-items: center; border: 1px solid transparent; }
.tool.hot { background: #d8e8fb; border-color: #c3dcf7; }
.tool.on { background: #a9d3fb; border-color: #84c1f8; }

.grip {
  width: 5px;
  height: 18px;
  flex: none;
  background: repeating-linear-gradient(#8d8d86 0 2px, transparent 2px 5px) 2px 1px / 2px 17px no-repeat;
}
.toolbar .grip:first-child, .statusbar .grip:first-child { width: 2px; background-position: 0 1px; }
.grip.flat {
  display: block;
  width: 17px;
  height: 5px;
  margin: 0 auto;
  background: repeating-linear-gradient(90deg, #a09e94 0 2px, transparent 2px 5px) 0 1px / 17px 2px no-repeat;
}

/* workbench */
.workbench { display: flex; flex: 1; min-height: 0; background: #f0f0f0; }
.views { width: 339px; display: flex; flex-direction: column; gap: 4px; margin-right: 4px; flex: none; }

.view {
  flex: 1 1 0;
  min-height: 0;
  display: flex;
  flex-direction: column;
  border: 1px solid #a0a0a0;
  border-radius: 7px 7px 0 0;
  background: #f0f0f0;
}
.views .view { border-left: 0; }

.tabs { display: flex; height: 24px; flex: none; overflow: hidden; border-radius: 6px 6px 0 0; }
.tab {
  position: relative;
  z-index: 1;
  display: flex;
  align-items: center;
  gap: 4px;
  padding-left: 2px;
  background: linear-gradient(#f4f4f4, #fff) 0 0 / calc(100% - 8px) 100% no-repeat;
  white-space: nowrap;
}
.tab .close { margin-left: 4px; }
.tab .close svg { width: 12px; height: 12px; }
.tab.back {
  margin-left: -8px;
  padding: 0 3px 0 6px;
  background: none;
  border-right: 1px solid #a0a0a0;
  border-radius: 0 7px 0 0;
  box-shadow: inset 0 -1px #a0a0a0;
}
.curve { width: 36px; height: 24px; margin-left: -8px; }
.tab-tools {
  flex: 1;
  display: flex;
  justify-content: flex-end;
  gap: 7px;
  padding: 3px 9px 0 0;
  border-bottom: 1px solid #a0a0a0;
}
.tab-tools button { height: 16px; }

.active { background: #99b4d1; }
.active .tabs { background: #f0f0f0; }
.active .tab { background-image: linear-gradient(#d3dfec, #99b4d1); }

.pane { flex: 1; margin: 2px; border: 1px solid #828790; background: #fff; display: flex; justify-content: flex-end; }
.active .pane { margin: 4px 4px 4px 3px; box-shadow: 0 0 0 1px #fff; }

.scrollbar { width: 19px; display: flex; flex-direction: column; background: #f0f0f0; color: #505050; flex: none; }
.scrollbar button { height: 21px; display: grid; place-items: center; flex: none; }
.scrollbar svg { width: 10px; height: 10px; }
.scrollbar.idle { justify-content: space-between; margin: 1px; color: #bfbfbf; }
.track { flex: 1; }
.thumb { height: 57%; background: #cdcdcd; }

.editor { min-width: 0; }
.editor-body { flex: 1; min-height: 0; display: flex; margin: 2px 3px 2px 2px; background: #fff; }
.canvas { flex: 1; min-width: 0; overflow: hidden; padding: 15px 0 0 10px; }

/* sections */
.controls { display: flex; gap: 40px; padding-left: 5px; }
.section { width: fit-content; }
.section h2 {
  display: flex;
  align-items: center;
  gap: 5px;
  height: 29px;
  padding: 2px 0 7px 7px;
  color: #0078d7;
  font-weight: 500;
  border-radius: 4px 4px 0 0;
  background:
    linear-gradient(#b8cce2, #b8cce2) 0 0 / 100% 1px no-repeat,
    linear-gradient(#b8cce2, #fff) 0 0 / 1px 29px no-repeat,
    linear-gradient(#b8cce2, #fff) 100% 0 / 1px 29px no-repeat,
    linear-gradient(#dfe6f1, #f7f9fc) 0 2px / 100% 18px no-repeat;
}
.section h2::before { content: ""; border: 4px solid transparent; border-top: 5px solid #0078d7; border-bottom: 0; }
.actions { display: flex; gap: 16px; padding: 10px 14px 0 13px; }
.actions button { display: flex; flex-direction: column; align-items: center; gap: 1px; }
.flow { margin-top: 28px; }

/* process steps */
.steps {
  display: grid;
  grid-template-columns: 536px 83px 430px 79px;
  align-items: center;
  row-gap: 6px;
  padding: 7px 8px 0 11px;
}
fieldset { min-width: 0; margin: 0; padding: 0 7px 6px; border: 1px solid #dcdcdc; }
legend { margin-left: -1px; padding: 0 2px; height: 20px; }
.step-main { margin-right: 6px; }
.list { padding-bottom: 14px; }
.arrow { width: 31px; height: 52px; justify-self: center; color: #a0a0a0; }
.arrow.ready { color: #17a9e2; }

.box { border: 1px solid #dcdcdc; }
.buttons { display: flex; gap: 7px; margin-top: 15px; padding: 15px 8px 7px; }
.info { margin-top: 16px; padding: 12px 7px 7px; }
.info p { line-height: 25px; }
.radios { display: flex; margin-top: 12px; padding: 14px 7px 6px; }
.radios label { display: flex; align-items: center; white-space: nowrap; }
.radios input {
  appearance: none;
  width: 16px;
  height: 16px;
  margin: 0 1px 0 5px;
  border: 1px solid #808080;
  border-radius: 50%;
  background: radial-gradient(circle, #6a6a6a 0 4px, #fff 6px);
}

.btn {
  display: flex;
  align-items: center;
  gap: 3px;
  height: 28px;
  padding: 0 6px 0 7px;
  border: 1px solid #adadad;
  background: #fff;
  box-shadow: 0 0 0 1px #efefef;
}
.btn:disabled { gap: 4px; padding-right: 5px; border-color: #bfbfbf; color: #838383; }

.stack { display: flex; flex-direction: column; align-items: flex-start; gap: 7px; margin: 5px 0 0 1px; }
.list .stack { margin-top: 6px; }
.stack .btn { min-width: 106px; }
.pair { display: flex; align-items: center; gap: 13px; color: #a0a0a0; }

.hints { display: flex; flex-direction: column; margin: 4px 0 2px; color: #a0a0a0; line-height: 25px; }
textarea { display: block; width: 100%; height: 162px; border: 1px solid #7a7a7a; background: #fff; resize: none; font: inherit; }

.exchange { display: flex; gap: 5px; margin-top: 15px; }
.exchange .stack { margin: 0; padding: 15px 8px 6px; width: 127px; flex: none; }
.matrix { flex: 1; padding: 13px 6px 0; }
table { border-spacing: 2px; table-layout: fixed; width: 373px; background: #f0f0f0; color: #838383; }
th, td { height: 28px; padding: 0; border: 1px solid #bfbfbf; background: #fff; font-weight: 400; text-align: center; white-space: nowrap; }
th { background: #b0e0e6; }
.self { background: #808a87; }
.set { background: #00ff80; }
.c-head { width: 46px; }
.c2 { width: 40px; }
.c3 { width: 55px; }

/* right-hand palette */
.sidebar {
  width: 24px;
  flex: none;
  padding: 1px 0 0;
  background: linear-gradient(#e3efff, #c2d5f0);
}
.sidebar .tool { width: 100%; }
.sidebar hr { height: 2px; margin: 3px 2px; border: 0; background: #8e979f; }

.statusbar { height: 27px; border-bottom: 1px solid #1d2733; }
.progress { margin-left: auto; margin-right: 318px; }
```
